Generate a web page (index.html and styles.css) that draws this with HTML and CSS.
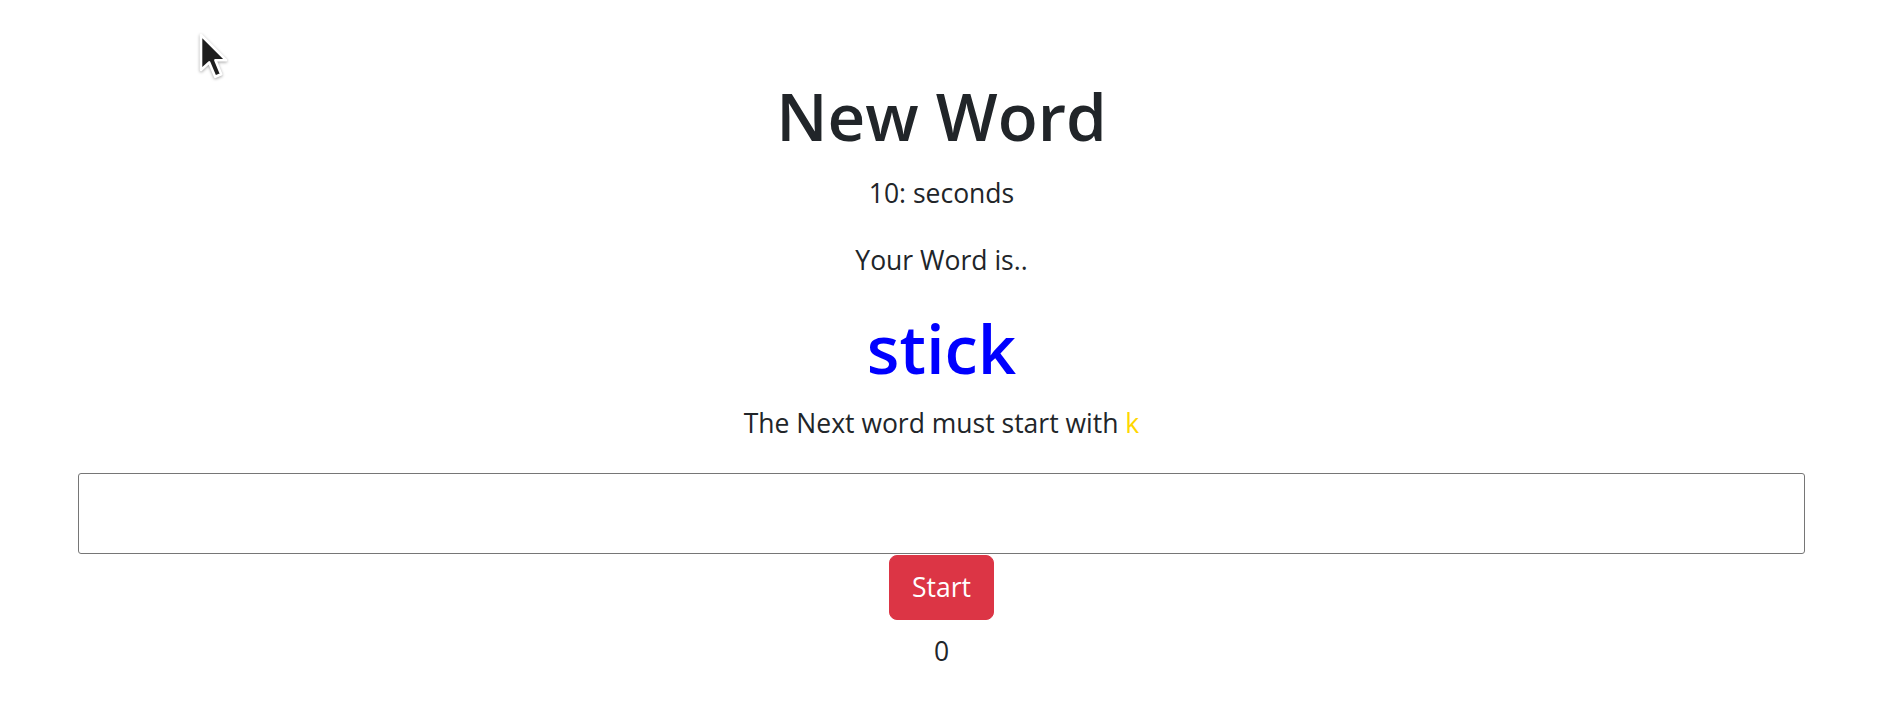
FILE: index.html
```html
<!DOCTYPE html>
<html lang="en">
<head>
<meta charset="utf-8">
<title>New Word</title>
<link rel="stylesheet" href="styles.css">
</head>
<body>
<main class="game">
  <h1 class="title">New Word</h1>
  <p class="timer">10: seconds</p>
  <p class="label">Your Word is..</p>
  <h1 class="word">stick</h1>
  <p class="hint">The Next word must start with <span class="letter">k</span></p>
  <input class="answer" type="text" aria-label="Your word">
  <button class="start" type="button">Start</button>
  <p class="score">0</p>
</main>
<svg class="cursor" width="30" height="52" viewBox="0 0 15 26" aria-hidden="true">
  <path d="M1.5 1.5 L1.5 19 L5.6 15.2 L8.6 22.4 L11.6 21.1 L8.7 14.1 L14 14.1 Z" fill="#1e1e1e" stroke="#fff" stroke-width="1.3" stroke-linejoin="round"/>
</svg>
</body>
</html>
```

FILE: styles.css
```css
html, body {
  margin: 0;
  padding: 0;
  background: #ffffff;
}

body {
  font-family: "Open Sans", "Noto Sans", sans-serif;
  color: #212529;
  position: relative;
  min-height: 722px;
}

.game {
  display: flex;
  flex-direction: column;
  align-items: center;
  text-align: center;
  padding-top: 74px;
}

.title {
  margin: 0;
  font-size: 65.5px;
  line-height: 84px;
  font-weight: 600;
}

.timer,
.label,
.hint,
.score {
  margin: 0;
  font-size: 26.5px;
  line-height: 40px;
}

.timer {
  margin-top: 15px;
}

.label {
  margin-top: 27px;
}

.word {
  margin: 26px 0 0;
  font-size: 67px;
  line-height: 84px;
  font-weight: 600;
  color: #0000ff;
}

.hint {
  margin-top: 13px;
}

.letter {
  color: #ffd700;
}

.answer {
  box-sizing: border-box;
  margin-top: 30px;
  width: 1727px;
  height: 81px;
  border: 1px solid #767676;
  border-radius: 3px;
  background: #fff;
  font: inherit;
  padding: 0 10px;
}

.start {
  margin-top: 1px;
  box-sizing: border-box;
  height: 65px;
  padding: 0 22.5px;
  border: 1px solid #dc3545;
  border-radius: 8px;
  background: #dc3545;
  color: #ffffff;
  font-family: inherit;
  font-size: 26.5px;
  line-height: 41px;
  cursor: pointer;
}

.score {
  margin-top: 11px;
}

.cursor {
  position: absolute;
  left: 198px;
  top: 32px;
  filter: drop-shadow(0 1px 1.5px rgba(0, 0, 0, 0.35));
}
```
